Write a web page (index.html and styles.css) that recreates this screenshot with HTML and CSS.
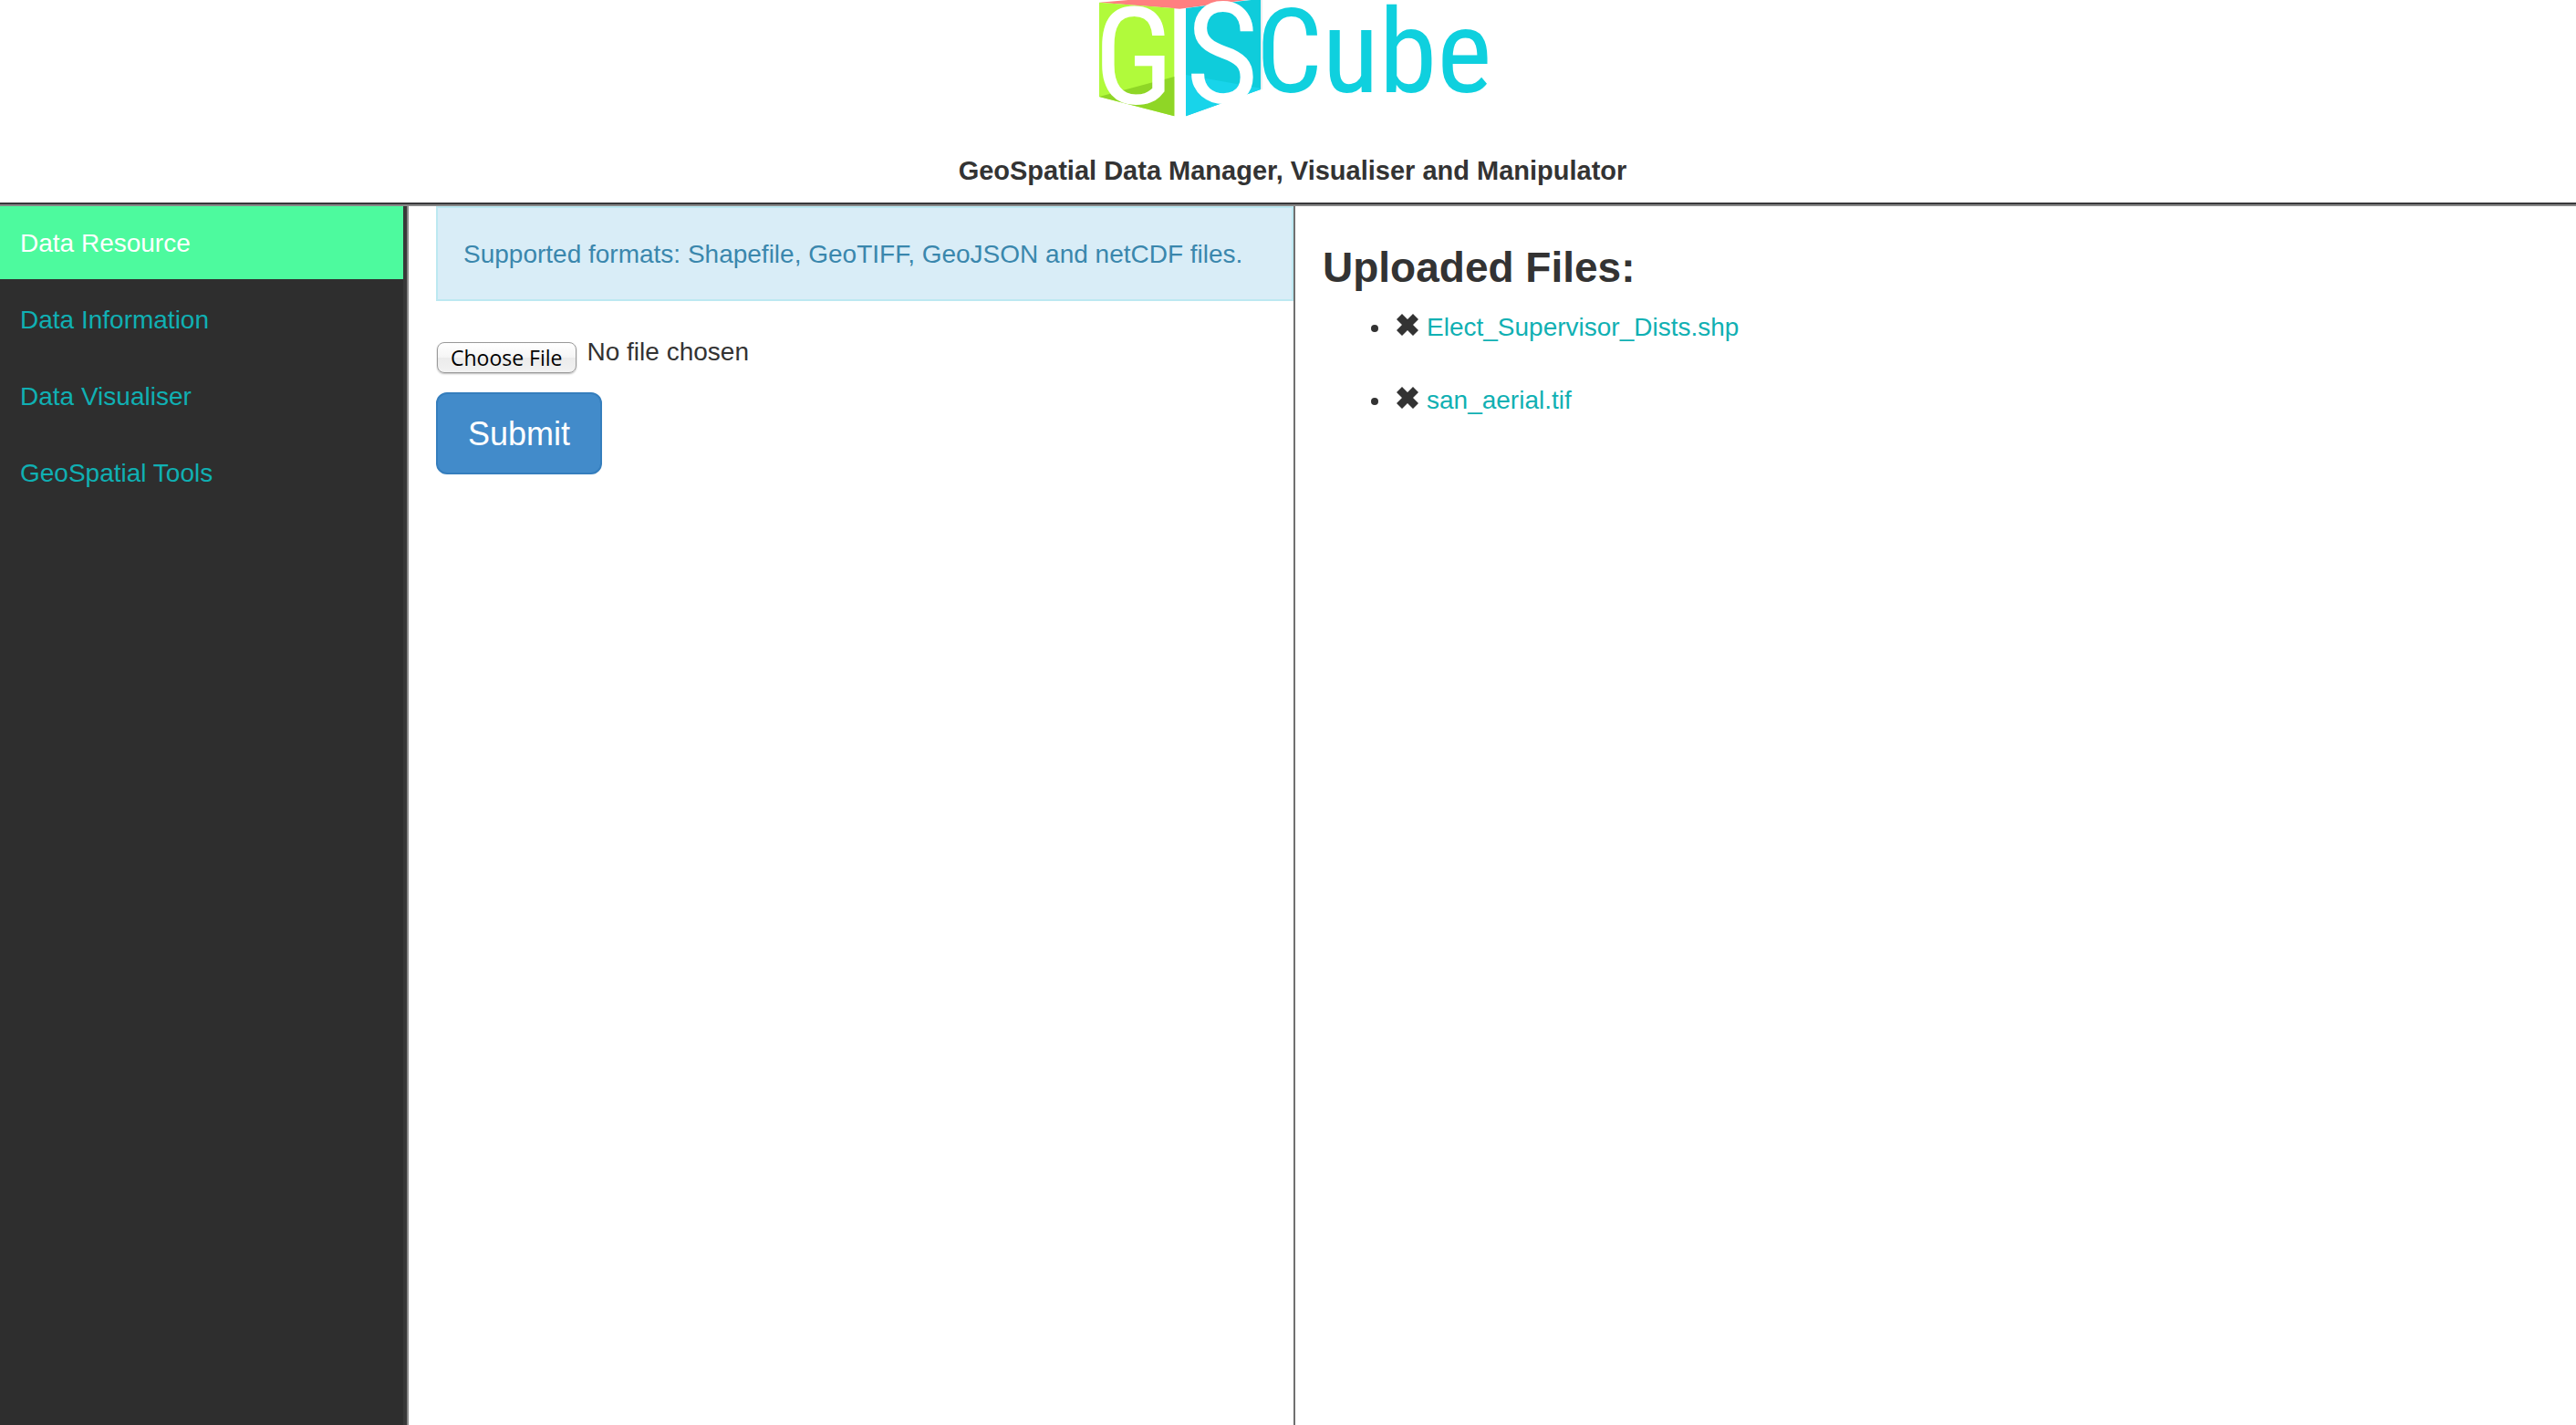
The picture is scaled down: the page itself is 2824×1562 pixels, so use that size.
FILE: index.html
```html
<!DOCTYPE html>
<html lang="en">
<head>
<meta charset="utf-8">
<title>GISCube</title>
<link rel="stylesheet" href="styles.css">
</head>
<body>
<header class="header">
  <svg class="logo" viewBox="66 0 1290 420" role="img" aria-label="GISCube">
    <polygon points="75,8 170,0 560,0 340,29" fill="#ff7f80"/>
    <polygon points="75,8 322,27 322,382 75,318" fill="#b1fa3b"/>
    <polygon points="75,318 322,252 322,382" fill="#8fd626"/>
    <polygon points="360,27 540,4 575,0 606,0 606,294 360,382" fill="#0fccdb"/>
    <polygon points="360,246 606,290 606,294 360,382" fill="#18d4ea"/>
    <path d="M609 0V294" stroke="#d3dfe2" stroke-width="3"/>
    <text class="logo-face" x="58" y="342" font-size="444">G</text>
    <text class="logo-face" x="359" y="338" font-size="464">S</text>
    <text class="logo-word" x="590" y="302" font-size="386">Cube</text>
  </svg>
  <h1 class="tagline">GeoSpatial Data Manager, Visualiser and Manipulator</h1>
</header>
<div class="layout">
  <nav class="sidebar">
    <a class="nav-link active" href="#resource">Data Resource</a>
    <a class="nav-link" href="#information">Data Information</a>
    <a class="nav-link" href="#visualiser">Data Visualiser</a>
    <a class="nav-link" href="#tools">GeoSpatial Tools</a>
  </nav>
  <main class="upload">
    <p class="alert">Supported formats: Shapefile, GeoTIFF, GeoJSON and netCDF files.</p>
    <form class="upload-form">
      <input class="file" type="file" aria-label="File to upload">
      <button class="submit" type="submit">Submit</button>
    </form>
  </main>
  <section class="files">
    <h2 class="files-title">Uploaded Files:</h2>
    <ul class="file-list">
      <li><button class="remove" type="button" aria-label="Remove Elect_Supervisor_Dists.shp"><svg viewBox="0 0 24 24"><path d="M6 0 12 6 18 0 24 6 18 12 24 18 18 24 12 18 6 24 0 18 6 12 0 6Z"/></svg></button><a href="#elect">Elect_Supervisor_Dists.shp</a></li>
      <li><button class="remove" type="button" aria-label="Remove san_aerial.tif"><svg viewBox="0 0 24 24"><path d="M6 0 12 6 18 0 24 6 18 12 24 18 18 24 12 18 6 24 0 18 6 12 0 6Z"/></svg></button><a href="#san">san_aerial.tif</a></li>
    </ul>
  </section>
</div>
</body>
</html>
```
FILE: styles.css
```css
* {
  box-sizing: border-box;
}

body {
  display: flex;
  flex-direction: column;
  min-height: 100vh;
  margin: 0;
  background: #fff;
  color: #333;
  font: 28px/40px "Liberation Sans", Arial, sans-serif;
}

a {
  color: #10b0b3;
  text-decoration: none;
}

.header {
  display: flex;
  flex-direction: column;
  align-items: center;
  padding: 0 0 16px 10px;
  border-bottom: 2px solid #888;
  box-shadow: inset 0 -2px #37373a;
}

.logo {
  width: 430px;
  height: 140px;
  overflow: visible;
}

.logo-face {
  fill: #fff;
  font-family: "Liberation Sans Narrow", "Roboto Condensed", Roboto, sans-serif;
}

.logo-word {
  fill: #0fd0de;
  font-family: "Liberation Sans Narrow", "Roboto Condensed", Roboto, sans-serif;
}

.tagline {
  margin: 26px 0 0;
  font-size: 29px;
  line-height: 42px;
}

.layout {
  display: grid;
  flex: 1;
  grid-template-columns: 448px 972fr 1404fr;
}

.sidebar {
  display: flex;
  flex-direction: column;
  gap: 4px;
  padding-right: 4px;
  border-right: 2px solid #888;
  background: linear-gradient(#383838, #383838) right / 4px 100% no-repeat #2e2e2e;
}

.nav-link {
  padding: 21px 22px 19px;
}

.nav-link.active {
  background: #4dfa9e;
  color: #fff;
}

.upload {
  padding-left: 30px;
  border-right: 2px solid #707070;
}

.alert {
  margin: 0;
  padding: 31px 28px 29px;
  border: 2px solid #bce8f1;
  background: #d9edf7;
  color: #3a87ad;
}

.upload-form {
  display: flex;
  flex-direction: column;
  align-items: flex-start;
  gap: 16px;
  padding-top: 36px;
}

.file {
  height: 48px;
  color: #333;
  font: inherit;
  line-height: 40px;
}

.file::file-selector-button {
  height: 34px;
  margin: 0 12px 0 1px;
  padding: 0 14px;
  border: 1px solid #999;
  border-radius: 8px;
  background: linear-gradient(#fff, #f5f5f5 50%, #ebebeb 50%, #f2f2f2);
  box-shadow: 0 1px 2px #bbb;
  color: #000;
  font: 23px/32px "Open Sans", sans-serif;
  vertical-align: -6px;
}

.submit {
  padding: 21px 33px 19px;
  border: 2px solid #357ebd;
  border-radius: 12px;
  background: #428bca;
  color: #fff;
  font: 36px/46px "Liberation Sans", Arial, sans-serif;
}

.files {
  padding: 40px 30px;
}

.files-title {
  margin: 0;
  font-size: 46px;
  line-height: 54px;
}

.file-list {
  display: flex;
  flex-direction: column;
  gap: 40px;
  margin: 19px 0 0;
  padding-left: 76px;
}

.remove {
  width: 24px;
  height: 24px;
  margin: 0 9px 0 5px;
  padding: 0;
  border: 0;
  background: none;
}

.remove svg {
  display: block;
  width: 24px;
  height: 24px;
  fill: #333;
}
```
